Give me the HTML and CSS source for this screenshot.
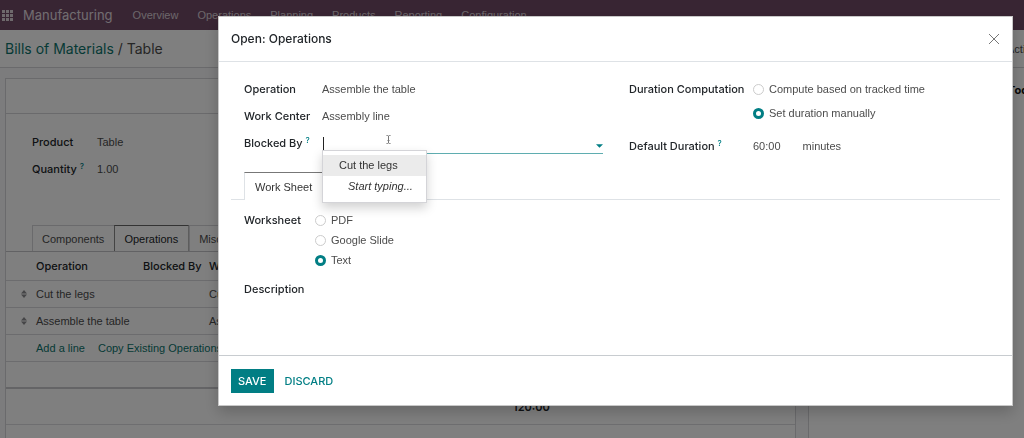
FILE: index.html
```html
<!DOCTYPE html>
<html lang="en">
<head>
<meta charset="utf-8">
<title>Manufacturing - Table</title>
<link rel="stylesheet" href="styles.css">
</head>
<body>
<div class="app">
  <nav class="navbar">
    <svg class="apps-icon" viewBox="0 0 11 11" aria-hidden="true">
      <path d="M0 0h3v3H0zM4 0h3v3H4zM8 0h3v3H8zM0 4h3v3H0zM4 4h3v3H4zM8 4h3v3H8zM0 8h3v3H0zM4 8h3v3H4zM8 8h3v3H8z"/>
    </svg>
    <a class="brand" href="#">Manufacturing</a>
    <a class="nav-link" href="#">Overview</a>
    <a class="nav-link" href="#">Operations</a>
    <a class="nav-link" href="#">Planning</a>
    <a class="nav-link" href="#">Products</a>
    <a class="nav-link" href="#">Reporting</a>
    <a class="nav-link" href="#">Configuration</a>
  </nav>
  <header class="control-panel">
    <div class="breadcrumb"><a href="#">Bills of Materials</a> / Table</div>
    <span class="action-menu">Action</span>
  </header>
  <div class="content">
    <div class="form-area">
      <div class="sheet">
        <div class="status-row"></div>
        <div class="sheet-fields">
          <span class="label">Product</span><span>Table</span>
          <span class="label">Quantity <sup class="help">?</sup></span><span>1.00</span>
        </div>
        <div class="sheet-tabs">
          <button class="sheet-tab" type="button">Components</button>
          <button class="sheet-tab active" type="button">Operations</button>
          <button class="sheet-tab" type="button">Misc</button>
        </div>
        <table class="lines">
          <thead>
            <tr><th class="col-handle"></th><th class="col-operation">Operation</th><th class="col-blocked">Blocked By</th><th>Work Center</th></tr>
          </thead>
          <tbody>
            <tr>
              <td class="col-handle"><svg class="handle" viewBox="0 0 6 8" aria-hidden="true"><path d="M0 3.4 3 0l3 3.4zM0 4.6h6L3 8z"/></svg></td>
              <td>Cut the legs</td><td></td><td>Cutting</td>
            </tr>
            <tr>
              <td class="col-handle"><svg class="handle" viewBox="0 0 6 8" aria-hidden="true"><path d="M0 3.4 3 0l3 3.4zM0 4.6h6L3 8z"/></svg></td>
              <td>Assemble the table</td><td></td><td>Assembly line</td>
            </tr>
            <tr>
              <td></td>
              <td colspan="3"><a class="line-link" href="#">Add a line</a><a class="line-link" href="#">Copy Existing Operations</a></td>
            </tr>
            <tr class="empty"><td colspan="4"></td></tr>
          </tbody>
        </table>
        <div class="total">120:00</div>
      </div>
    </div>
    <aside class="chatter">Today</aside>
  </div>
</div>

<div class="backdrop">
  <section class="modal" role="dialog" aria-modal="true" aria-labelledby="modal-title">
    <header class="modal-header">
      <h1 class="modal-title" id="modal-title">Open: Operations</h1>
      <button class="close" type="button" aria-label="Close">
        <svg viewBox="0 0 12 12" aria-hidden="true"><path d="M1 1l10 10M11 1 1 11"/></svg>
      </button>
    </header>
    <form class="modal-body">
      <div class="groups">
        <div class="group">
          <div class="row"><span class="label">Operation</span><span>Assemble the table</span></div>
          <div class="row"><span class="label">Work Center</span><span>Assembly line</span></div>
          <div class="row">
            <label class="label" for="blocked">Blocked By <sup class="help">?</sup></label>
            <div class="combo">
              <input class="combo-input" id="blocked" type="text" autocomplete="off" autofocus>
              <span class="caret"></span>
              <svg class="pointer" viewBox="0 0 5 9" aria-hidden="true"><path d="M.5.5h1.2l.8.6.8-.6h1.2M.5 8.5h1.2l.8-.6.8.6h1.2M2.5 1v7M1.5 5.5h2"/></svg>
              <svg class="arrow" viewBox="0 0 6 3" aria-hidden="true"><path d="M0 0h6L3 3z"/></svg>
              <ul class="menu">
                <li class="menu-item selected">Cut the legs</li>
                <li class="menu-item hint">Start typing...</li>
              </ul>
            </div>
          </div>
        </div>
        <div class="group duration">
          <div class="row top">
            <span class="label" id="computation">Duration Computation</span>
            <div class="radios spaced" role="radiogroup" aria-labelledby="computation">
              <label class="radio"><input type="radio" name="computation">Compute based on tracked time</label>
              <label class="radio"><input type="radio" name="computation" checked>Set duration manually</label>
            </div>
          </div>
          <div class="row">
            <span class="label">Default Duration <sup class="help">?</sup></span>
            <span class="minutes"><span>60:00</span><span>minutes</span></span>
          </div>
        </div>
      </div>
      <div class="tabs"><button class="tab" type="button">Work Sheet</button></div>
      <div class="worksheet">
        <span class="label" id="worksheet">Worksheet</span>
        <div class="radios" role="radiogroup" aria-labelledby="worksheet">
          <label class="radio"><input type="radio" name="worksheet">PDF</label>
          <label class="radio"><input type="radio" name="worksheet">Google Slide</label>
          <label class="radio"><input type="radio" name="worksheet" checked>Text</label>
        </div>
        <span class="label">Description</span>
      </div>
    </form>
    <footer class="modal-footer">
      <button class="save" type="button">SAVE</button>
      <button class="discard" type="button">DISCARD</button>
    </footer>
  </section>
</div>
</body>
</html>
```
FILE: styles.css
```css
* { box-sizing: border-box; }

body {
  margin: 0;
  overflow: hidden;
  background: #fff;
  color: #4c4c4c;
  font: 11px/16px "Liberation Sans", Arial, sans-serif;
}

a { color: #017e84; text-decoration: none; }
button, input { font: inherit; color: inherit; margin: 0; padding: 0; border: 0; background: none; }
.label, .brand, .breadcrumb, .lines th, .modal-title, .save, .discard, .chatter, .total {
  font-family: Inter, "Liberation Sans", sans-serif;
}
.label { color: #212529; font-weight: 500; }
.help { color: #017e84; font-size: 8px; line-height: 1; vertical-align: 4px; }

/* Application behind the dialog */
.app { display: flex; flex-direction: column; height: 100vh; overflow: hidden; }

.navbar {
  display: flex;
  flex: none;
  align-items: center;
  height: 30px;
  padding: 0 2px;
  background: #714b67;
}
.apps-icon { width: 11px; height: 11px; margin-right: 10px; fill: #dcd2d9; }
.brand { margin-right: 20px; color: #e3dbe1; font-size: 13px; }
.nav-link { margin-right: 19px; color: #d8cdd5; }

.control-panel {
  display: flex;
  flex: none;
  align-items: center;
  justify-content: space-between;
  height: 38px;
  padding-left: 5px;
  border-bottom: 1px solid #d4d4d8;
}
.breadcrumb { font-size: 14px; }
.breadcrumb a, .line-link { color: #0c746c; }
.action-menu { width: 17px; overflow: hidden; white-space: nowrap; }

.content { display: flex; flex: 1; min-height: 0; }
.form-area { flex: 1; padding: 10px 12px 0 5px; background: #f8f8fa; border-right: 1px solid #d4d4d8; }
.sheet { height: 100%; overflow: hidden; background: #fff; border: 1px solid #d4d4d8; border-bottom: 0; }
.chatter { width: 215px; padding: 14px 0 0 199px; overflow: hidden; color: #111; font-weight: 700; }

.status-row { height: 35px; border-bottom: 1px solid #d4d4d8; }
.sheet-fields {
  display: grid;
  grid-template-columns: 65px 1fr;
  row-gap: 11px;
  padding: 20px 26px 48px;
}
.sheet-tabs { display: flex; padding-left: 26px; border-bottom: 1px solid #c4c4c8; }
.sheet-tab { height: 26px; padding: 0 10px 0 9px; border-top: 1px solid #d4d4d8; border-left: 1px solid #d4d4d8; }
.sheet-tab.active { border-top-color: #666; border-left-color: #888; border-right: 1px solid #bbb; color: #212529; }

.lines { width: 100%; border-collapse: collapse; table-layout: fixed; }
.lines tr { height: 28px; border-bottom: 1px solid #d8d8dc; }
.lines tbody tr { height: 27px; }
.lines tr.empty { border-bottom: 2px solid #c8c8cc; }
.lines th { padding: 0; text-align: left; color: #212529; font-weight: 500; }
.lines td { padding: 0; }
.lines .col-handle { width: 30px; padding-left: 15px; }
.lines .col-operation { width: 107px; }
.lines .col-blocked { width: 66px; }
.handle { display: block; width: 6px; height: 8px; fill: #8c8c90; }
.line-link { margin-right: 13px; }
.total { height: 36px; padding: 10px 0 0 507px; border-bottom: 1px solid #dcdce0; color: #212529; font-weight: 600; }

/* Dialog */
.backdrop {
  position: fixed;
  inset: 0;
  padding: 16px 11px 0 218px;
  background: rgba(0, 0, 0, .5);
}
.modal { background: #fff; border: 1px solid #c8c8c8; box-shadow: 0 6px 14px rgba(0, 0, 0, .2); }
.modal-header {
  display: flex;
  align-items: center;
  justify-content: space-between;
  height: 45px;
  padding: 0 12px;
  border-bottom: 1px solid #dee2e6;
}
.modal-title { margin: 0; color: #212529; font-size: 12px; font-weight: 500; }
.close { display: flex; }
.close svg { width: 12px; height: 12px; fill: none; stroke: #777; stroke-width: 1; }

.modal-body { height: 293px; padding: 13px 12px 0; }
.groups { display: grid; grid-template-columns: 359fr 371fr; gap: 26px; padding-left: 13px; }
.row { display: grid; grid-template-columns: 78px 1fr; align-items: center; min-height: 27px; }
.duration .row { grid-template-columns: 124px 1fr; }
.duration .row.top { align-items: start; padding-top: 6px; min-height: 57px; }

.combo { position: relative; height: 22px; border-bottom: 1px solid #5fadb0; }
.combo-input { width: 100%; height: 20px; outline: 0; caret-color: transparent; }
.caret { position: absolute; left: 1px; top: 5px; width: 1px; height: 13px; background: #222; }
.pointer { position: absolute; left: 64px; top: 3px; width: 5px; height: 9px; fill: none; stroke: #777; stroke-width: 1; }
.arrow { position: absolute; right: 0; top: 12px; width: 7px; height: 4px; fill: #017e84; }
.menu {
  position: absolute;
  z-index: 1;
  left: 0;
  top: 18px;
  width: 105px;
  margin: 0;
  padding: 4px 0 5px;
  list-style: none;
  background: #fff;
  border: 1px solid #d4d4d8;
  box-shadow: 0 5px 10px rgba(0, 0, 0, .18);
}
.menu-item { padding: 0 16px; line-height: 21px; color: #333; white-space: nowrap; }
.menu-item.selected { background: #ebebeb; }
.menu-item.hint { padding-left: 25px; padding-right: 0; font-style: italic; }

.radios { display: flex; flex-direction: column; gap: 4px; }
.radios.spaced { gap: 8px; }
.radio { display: flex; align-items: center; gap: 5px; }
.radio input {
  appearance: none;
  width: 11px;
  height: 11px;
  border: 1px solid #ccc;
  border-radius: 50%;
  background: #fff;
}
.radio input:checked { border: 3px solid #017e84; }
.minutes { display: flex; gap: 22px; }

.tabs { display: flex; margin-top: 13px; padding-left: 13px; border-bottom: 1px solid #dee2e6; }
.tab {
  height: 28px;
  margin-bottom: -1px;
  padding: 0 10px;
  background: #fff;
  border: 1px solid #dee2e6;
  border-top-color: #777;
  border-bottom: 0;
  color: #333;
}
.worksheet { display: grid; grid-template-columns: 71px 1fr; row-gap: 13px; padding: 12px 0 0 13px; }

.modal-footer {
  display: flex;
  align-items: center;
  gap: 11px;
  height: 50px;
  padding: 0 12px;
  border-top: 1px solid #c8ccd0;
}
.save { height: 24px; padding: 0 7px; background: #017e84; color: #fff; font-weight: 500; }
.discard { color: #017e84; font-weight: 500; }
```
